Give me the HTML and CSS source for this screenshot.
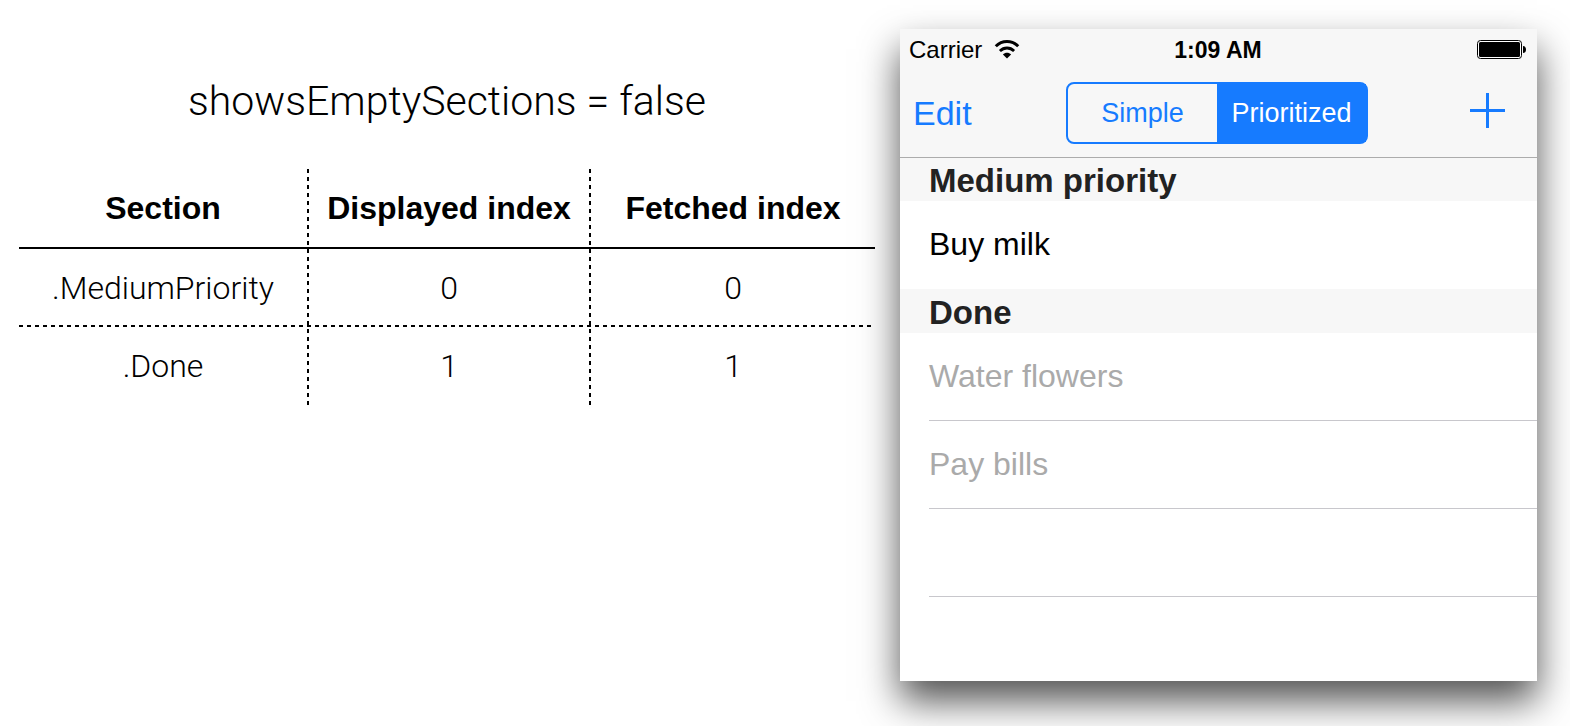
FILE: index.html
```html
<!DOCTYPE html>
<html lang="en">
<head>
    <meta charset="UTF-8">
    <meta name="viewport" content="width=device-width, initial-scale=1.0">
    <title>showsEmptySections = false</title>
    <link rel="stylesheet" href="styles.css">
</head>
<body>
    <div class="container">
        <section class="mapping">
            <h1>showsEmptySections = false</h1>

            <table class="index-table">
                <colgroup>
                    <col class="col-section">
                    <col class="col-displayed">
                    <col>
                </colgroup>
                <thead>
                    <tr>
                        <th scope="col">Section</th>
                        <th scope="col">Displayed index</th>
                        <th scope="col">Fetched index</th>
                    </tr>
                </thead>
                <tbody>
                    <tr class="divided">
                        <td>.MediumPriority</td>
                        <td>0</td>
                        <td>0</td>
                    </tr>
                    <tr>
                        <td>.Done</td>
                        <td>1</td>
                        <td>1</td>
                    </tr>
                </tbody>
            </table>
        </section>

        <main class="phone">
            <header class="top">
                <div class="status-bar">
                    <span class="carrier">
                        Carrier
                        <svg class="wifi" width="26" height="20" viewBox="0 0 26 20" aria-hidden="true">
                            <path d="M1.8 6.3C8 0 18 0 24.2 6.3" fill="none" stroke="#000" stroke-width="3"/>
                            <path d="M5.9 11C10 7 16 7 20.1 11" fill="none" stroke="#000" stroke-width="2.8"/>
                            <path d="M13 18.5L8.9 14.4C11.2 12.2 14.8 12.2 17.1 14.4Z"/>
                        </svg>
                    </span>
                    <span class="time">1:09 AM</span>
                    <svg class="battery" width="50" height="20" viewBox="0 0 50 20" aria-hidden="true">
                        <rect x="0.5" y="0.5" width="44" height="18" rx="3" fill="#fff" stroke="#000"/>
                        <rect x="2" y="2" width="41" height="15" rx="1.5"/>
                        <path d="M46 6C48 6 49 7.5 49 9.5C49 11.5 48 13 46 13Z"/>
                    </svg>
                </div>
                <nav class="nav-bar">
                    <button class="edit" type="button">Edit</button>
                    <div class="segments">
                        <button type="button">Simple</button>
                        <button class="active" type="button">Prioritized</button>
                    </div>
                    <button class="add" type="button" aria-label="Add">
                        <svg width="35" height="35" viewBox="0 0 35 35" aria-hidden="true">
                            <path d="M16 0h3v16h16v3H19v16h-3V19H0v-3h16z" fill="#167bff"/>
                        </svg>
                    </button>
                </nav>
            </header>

            <h2>Medium priority</h2>
            <ul class="tasks">
                <li>Buy milk</li>
            </ul>

            <h2>Done</h2>
            <ul class="tasks done">
                <li>Water flowers</li>
                <li>Pay bills</li>
                <li></li>
            </ul>
        </main>
    </div>
</body>
</html>
```
FILE: styles.css
```css
* {
    box-sizing: border-box;
}
body {
    margin: 0;
    background-color: #fff;
    color: #000;
    font-family: "Liberation Sans", Helvetica, Arial, sans-serif;
    font-size: 32px;
}
.container {
    display: grid;
    grid-template-columns: 856fr 637fr;
    gap: 25px;
    padding: 29px 33px 45px 19px;
}
h1 {
    margin: 48px 0 44px;
    font-family: Roboto, "Liberation Sans", sans-serif;
    font-size: 41px;
    font-weight: 300;
    line-height: 48px;
    text-align: center;
}

/* Section / index table */
.index-table {
    width: 100%;
    table-layout: fixed;
    border-collapse: separate;
    border-spacing: 0;
}
.col-section,
.col-displayed {
    width: 282px;
    background: repeating-linear-gradient(to bottom, #000 0 4px, transparent 4px 8px) right top / 2px 100% no-repeat;
}
.col-section {
    width: 290px;
}
.index-table th,
.index-table td {
    height: 78px;
    padding: 0 2px 0 0;
    text-align: center;
    white-space: nowrap;
}
.index-table th {
    height: 80px;
    border-bottom: 2px solid #000;
}
.index-table td {
    font-family: Roboto, "Liberation Sans", sans-serif;
    font-weight: 300;
}
.index-table tr > :last-child {
    padding: 0;
}
.divided {
    background: repeating-linear-gradient(to right, #000 0 4px, transparent 4px 8px) left bottom / 100% 2px no-repeat;
}

/* Phone */
.phone {
    min-height: 652px;
    background-color: #fff;
    box-shadow: 0 20px 36px rgba(0, 0, 0, 0.68);
}
.top {
    position: relative;
    margin-bottom: -1px;
    background-color: #f7f7f7;
    border-bottom: 1px solid #acacac;
}
.status-bar,
.nav-bar {
    display: grid;
    grid-template-columns: 1fr auto 1fr;
    align-items: center;
}
.status-bar {
    height: 40px;
    padding: 2px 10px 0 9px;
    font-size: 24px;
}
.carrier {
    display: flex;
    align-items: center;
    gap: 12px;
}
.time {
    font-size: 23px;
    font-weight: bold;
}
.battery {
    justify-self: end;
}
.nav-bar {
    height: 88px;
    padding: 0 16px 0 13px;
}
button {
    padding: 0;
    border: 0;
    background: none;
    color: #167bff;
    font-family: inherit;
}
.edit {
    justify-self: start;
    font-size: 34px;
}
.segments {
    display: flex;
    width: 302px;
    height: 62px;
    border: 2px solid #167bff;
    border-radius: 8px;
}
.segments button {
    flex: 1;
    font-size: 27px;
}
.segments .active {
    background-color: #167bff;
    color: #fff;
}
.add {
    justify-self: end;
    padding: 0 16px 6px 0;
    line-height: 0;
}
h2 {
    margin: 0;
    padding: 3px 0 0 29px;
    background-color: #f7f7f7;
    color: #222;
    font-size: 33px;
    line-height: 41px;
}
.tasks {
    margin: 0;
    padding: 0 0 0 29px;
    list-style: none;
}
.tasks li {
    height: 88px;
    line-height: 86px;
}
.done li {
    border-bottom: 1px solid #c8c7cc;
    color: #aaa;
}
```
